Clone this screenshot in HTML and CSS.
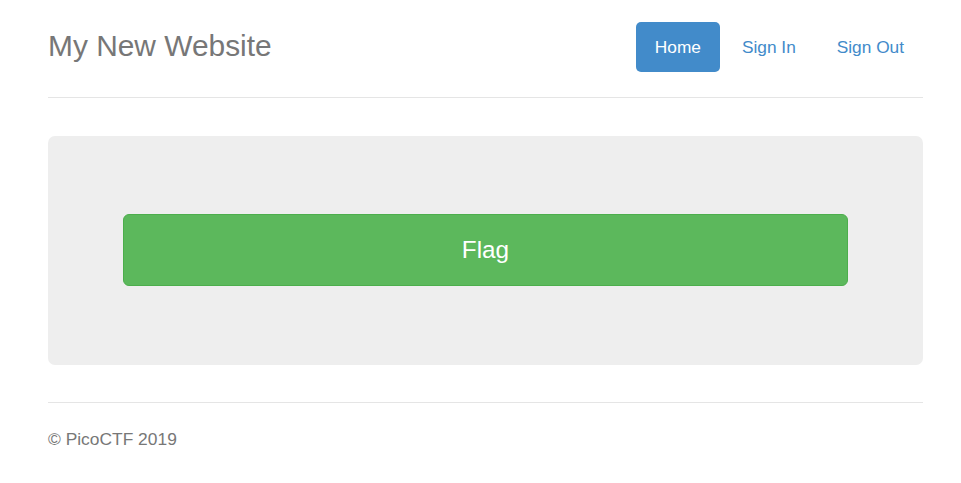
FILE: index.html
```html
<!DOCTYPE html>
<html lang="en">
<head>
<meta charset="utf-8">
<title>My New Website</title>
<link rel="stylesheet" href="styles.css">
</head>
<body>
<div class="container">
  <header class="header">
    <h3 class="brand">My New Website</h3>
    <nav class="nav">
      <a class="pill active" href="#">Home</a>
      <a class="pill" href="#">Sign In</a>
      <a class="pill" href="#">Sign Out</a>
    </nav>
  </header>
  <main class="jumbotron">
    <a class="btn-flag" href="#">Flag</a>
  </main>
  <footer class="footer">
    <p>© PicoCTF 2019</p>
  </footer>
</div>
</body>
</html>
```
FILE: styles.css
```css
html, body {
  margin: 0;
  padding: 0;
  background: #fff;
}
body {
  font-family: "Liberation Sans", Arial, sans-serif;
  color: #333;
}
.container {
  padding: 0 38px 0 48px;
}
.header {
  display: flex;
  justify-content: space-between;
  align-items: flex-start;
  padding-top: 22px;
  padding-bottom: 25px;
  border-bottom: 1px solid #e5e5e5;
}
.brand {
  margin: 8.4px 0 0;
  font-size: 29.9px;
  line-height: 1.1;
  font-weight: 400;
  color: #777;
}
.nav {
  display: flex;
  gap: 3px;
}
.pill {
  display: block;
  height: 50px;
  line-height: 50px;
  padding: 0 19px;
  font-size: 17.3px;
  color: #428bca;
  text-decoration: none;
  border-radius: 5px;
}
.pill.active {
  background: #428bca;
  color: #fff;
}
.jumbotron {
  margin-top: 38px;
  padding: 78px 75px 79px;
  background: #eee;
  border-radius: 7px;
  display: flex;
}
.btn-flag {
  flex: 1;
  display: flex;
  align-items: center;
  justify-content: center;
  height: 70px;
  background: #5cb85c;
  border: 1px solid #4cae4c;
  border-radius: 6px;
  color: #fff;
  font-size: 24.3px;
  text-decoration: none;
}
.footer {
  margin-top: 37px;
  border-top: 1px solid #e5e5e5;
  padding-top: 24px;
}
.footer p {
  margin: 0;
  font-size: 17.4px;
  line-height: 24.8px;
  color: #777;
}
```
